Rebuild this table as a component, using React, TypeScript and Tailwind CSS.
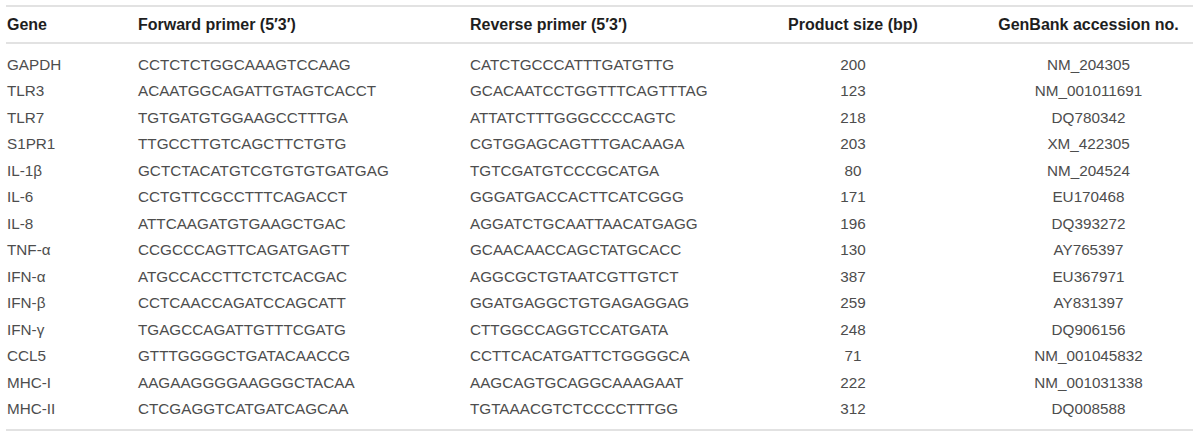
import React from "react";

const rows: [string, string, string, string, string][] = [
  ["GAPDH", "CCTCTCTGGCAAAGTCCAAG", "CATCTGCCCATTTGATGTTG", "200", "NM_204305"],
  ["TLR3", "ACAATGGCAGATTGTAGTCACCT", "GCACAATCCTGGTTTCAGTTTAG", "123", "NM_001011691"],
  ["TLR7", "TGTGATGTGGAAGCCTTTGA", "ATTATCTTTGGGCCCCAGTC", "218", "DQ780342"],
  ["S1PR1", "TTGCCTTGTCAGCTTCTGTG", "CGTGGAGCAGTTTGACAAGA", "203", "XM_422305"],
  ["IL-1β", "GCTCTACATGTCGTGTGTGATGAG", "TGTCGATGTCCCGCATGA", "80", "NM_204524"],
  ["IL-6", "CCTGTTCGCCTTTCAGACCT", "GGGATGACCACTTCATCGGG", "171", "EU170468"],
  ["IL-8", "ATTCAAGATGTGAAGCTGAC", "AGGATCTGCAATTAACATGAGG", "196", "DQ393272"],
  ["TNF-α", "CCGCCCAGTTCAGATGAGTT", "GCAACAACCAGCTATGCACC", "130", "AY765397"],
  ["IFN-α", "ATGCCACCTTCTCTCACGAC", "AGGCGCTGTAATCGTTGTCT", "387", "EU367971"],
  ["IFN-β", "CCTCAACCAGATCCAGCATT", "GGATGAGGCTGTGAGAGGAG", "259", "AY831397"],
  ["IFN-γ", "TGAGCCAGATTGTTTCGATG", "CTTGGCCAGGTCCATGATA", "248", "DQ906156"],
  ["CCL5", "GTTTGGGGCTGATACAACCG", "CCTTCACATGATTCTGGGGCA", "71", "NM_001045832"],
  ["MHC-I", "AAGAAGGGGAAGGGCTACAA", "AAGCAGTGCAGGCAAAGAAT", "222", "NM_001031338"],
  ["MHC-II", "CTCGAGGTCATGATCAGCAA", "TGTAAACGTCTCCCCTTTGG", "312", "DQ008588"],
];

const cols = "grid grid-cols-[132px_332px_302px_162px_259px]";

export default function App() {
  return (
    <div
      className="w-[1200px] h-[440px] bg-white pt-[5px] px-[6px]"
      style={{ fontFamily: '"Liberation Sans", Arial, sans-serif' }}
    >
      <div className="w-[1187px] border-t-2 border-b-2 border-[#e2e2e2]">
        <div className={`${cols} h-[37px] items-center border-b-2 border-[#e2e2e2] text-[16px] font-bold text-[#1e1e1e]`}>
          <div className="pl-[1px]">Gene</div>
          <div>Forward primer (5′3′)</div>
          <div>Reverse primer (5′3′)</div>
          <div className="text-center">Product size (bp)</div>
          <div className="text-center pl-[50px]">GenBank accession no.</div>
        </div>
        <div className="pt-[8px] pb-[6px] text-[15.25px] text-[#4d4d4d]">
          {rows.map((r) => (
            <div key={r[0]} className={`${cols} h-[26.5px] items-center`}>
              <div className="pl-[1px]">{r[0]}</div>
              <div>{r[1]}</div>
              <div>{r[2]}</div>
              <div className="text-center">{r[3]}</div>
              <div className="text-center pl-[50px]">{r[4]}</div>
            </div>
          ))}
        </div>
      </div>
    </div>
  );
}
